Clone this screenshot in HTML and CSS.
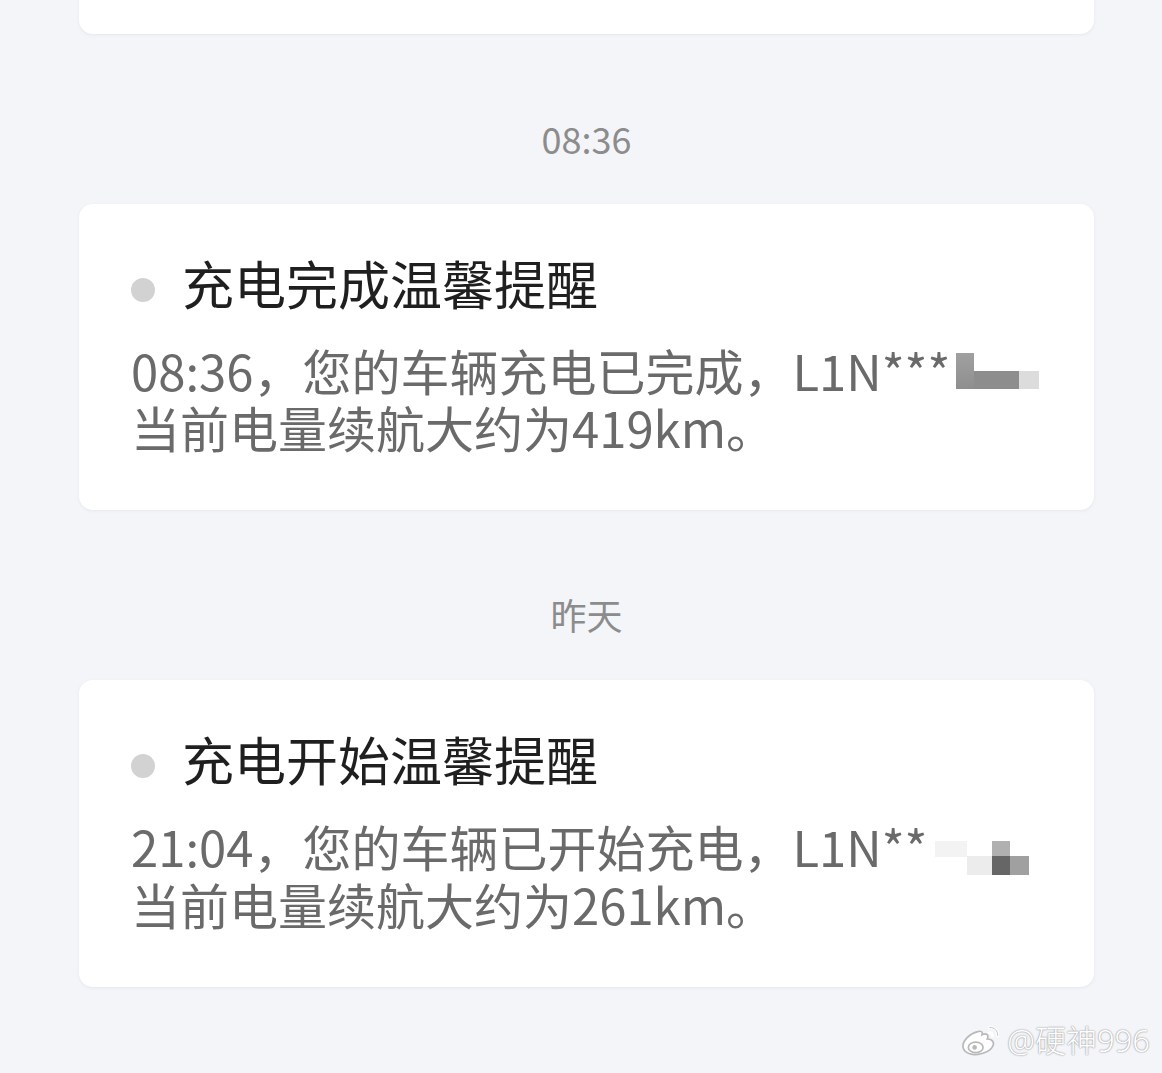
FILE: index.html
```html
<!DOCTYPE html>
<html>

<head>
    <meta name="viewport" charset="utf-8" content="width=device-width, initial-scale=1.0" />
    <title>消息通知</title>
    <link rel="stylesheet" href="styles.css">
</head>

<body>
    <div class="msg-list">
        <div class="card card-cut"></div>

        <div class="time">08:36</div>
        <div class="card">
            <div class="card-title">
                <span class="dot"></span>
                <span>充电完成温馨提醒</span>
            </div>
            <div class="card-body">
                08:36，您的车辆充电已完成，L1N***<span class="mosaic m1"><i class="a"></i><i class="b"></i><i class="c"></i></span><br>
                当前电量续航大约为419km。
            </div>
        </div>

        <div class="time">昨天</div>
        <div class="card">
            <div class="card-title">
                <span class="dot"></span>
                <span>充电开始温馨提醒</span>
            </div>
            <div class="card-body">
                21:04，您的车辆已开始充电，L1N**<span class="mosaic m2"><i class="a"></i><i class="b"></i><i class="c"></i><i class="d"></i></span><br>
                当前电量续航大约为261km。
            </div>
        </div>
    </div>

    <!-- 水印 -->
    <div class="watermark">
        <svg width="42" height="34" viewBox="0 0 40 32">
            <path d="M16 9 C8 11 1 18 2 24 C3 30 12 32 19 30 C28 28 33 22 30 18 C29 16 26 16 25 16 C27 12 24 10 20 12 C21 9 19 8 16 9 Z" fill="#fff" stroke="#b8b8b8" stroke-width="1.6"/>
            <ellipse cx="14" cy="24" rx="7" ry="5" fill="none" stroke="#b8b8b8" stroke-width="1.6"/>
            <circle cx="13" cy="24" r="2.2" fill="#b8b8b8"/>
            <path d="M27 5 C32 5 35 8 35 13" fill="none" stroke="#fff" stroke-width="3" stroke-linecap="round"/>
            <path d="M27 5 C32 5 35 8 35 13" fill="none" stroke="#b8b8b8" stroke-width="0.8"/>
            <path d="M27 10 C29 10 30 11 30 13" fill="none" stroke="#fff" stroke-width="2.6" stroke-linecap="round"/>
        </svg>
        <span>@硬神996</span>
    </div>
</body>

</html>
```

FILE: styles.css
```css
body {
    margin: 0;
    padding: 0;
    background-color: #f4f5f9;
    font-family: "Noto Sans CJK SC", "Noto Sans", sans-serif;
    height: 1073px;
    overflow: hidden;
    position: relative;
}

.msg-list {
    padding-left: 79px;
    width: 1015px;
}

.card {
    background-color: #ffffff;
    border-radius: 14px;
    box-shadow: 0 1px 3px rgba(200, 205, 215, 0.35);
    padding: 48px 0 55px 52px;
}

.card-cut {
    height: 34px;
    padding: 0;
    border-radius: 0 0 14px 14px;
}

.time {
    height: 170px;
    box-sizing: border-box;
    padding-top: 85px;
    text-align: center;
    font-size: 36px;
    line-height: 44px;
    color: #8c8c8c;
    margin-top: -3px;
    margin-bottom: 3px;
}

.card-title {
    display: flex;
    align-items: center;
    font-size: 52px;
    line-height: 62px;
    color: #1f1f1f;
    font-weight: 400;
}

.dot {
    width: 24px;
    height: 24px;
    border-radius: 50%;
    background-color: #d2d2d2;
    margin: 14px 27px 0 0;
}

.card-body {
    margin-top: 27px;
    font-size: 49px;
    line-height: 57px;
    color: #6a6a6a;
}

.mosaic {
    display: inline-flex;
    height: 36px;
    align-items: flex-start;
}

.mosaic i {
    display: inline-block;
}

.m1 {
    margin-left: 6px;
    vertical-align: 2px;
}

.m1 .a {
    width: 18px;
    height: 36px;
    background: linear-gradient(#a0a0a0, #8e8e8e);
}

.m1 .b {
    width: 45px;
    height: 36px;
    background: linear-gradient(#ffffff 0 50%, #8d8d8d 50%);
}

.m1 .c {
    width: 20px;
    height: 36px;
    background: linear-gradient(#ffffff 0 50%, #dcdcdc 50%);
}

.m2 {
    margin-left: 8px;
    height: 34px;
    vertical-align: 10px;
}

.m2 .a {
    width: 32px;
    height: 16px;
    background-color: #f3f3f3;
}

.m2 .b {
    width: 25px;
    height: 34px;
    background: linear-gradient(#ffffff 0 45%, #ececec 45%);
}

.m2 .c {
    width: 18px;
    height: 34px;
    background: linear-gradient(#b0b0b0 0 45%, #666666 45%);
}

.m2 .d {
    width: 19px;
    height: 34px;
    background: linear-gradient(#ffffff 0 45%, #a0a0a0 45%);
}

.watermark {
    position: absolute;
    right: 12px;
    bottom: 12px;
    display: flex;
    align-items: center;
    gap: 4px;
    font-family: "Noto Sans", "Noto Sans CJK SC", sans-serif;
    font-size: 31px;
    font-weight: 300;
    color: #ffffff;
    text-shadow: 0 0 2px #9a9a9a, 0 0 1px #9a9a9a;
}
```
